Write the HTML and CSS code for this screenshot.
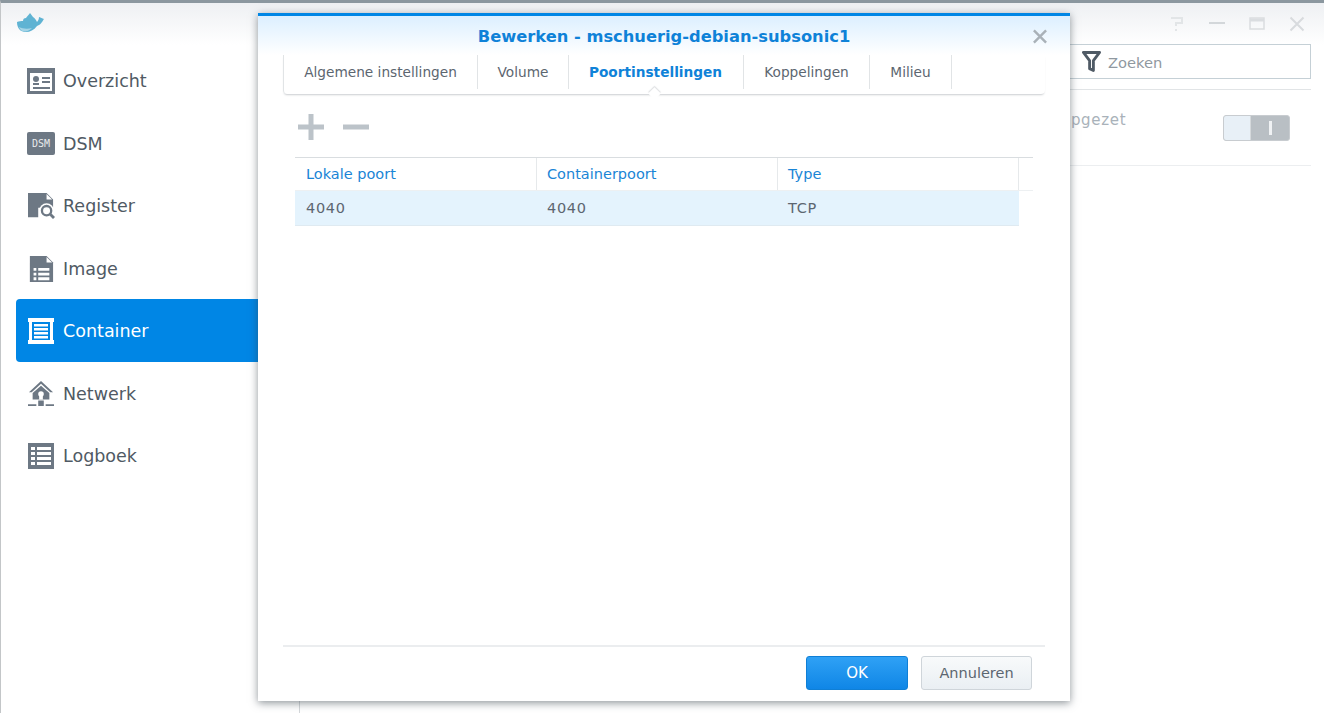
FILE: index.html
```html
<!DOCTYPE html>
<html lang="nl">
<head>
<meta charset="utf-8">
<title>Docker</title>
<link rel="stylesheet" href="styles.css">
</head>
<body>
<div class="window">
  <header class="titlebar">
    <svg class="whale" viewBox="0 0 30 20"><path d="M1 9c2-1 4-1 6-1 0-2 1-3 3-3 1-2 3-3 4-5 1 1 2 3 3 4 2 1 3 3 4 5 1-1 2-3 2-5 2 1 3 1 5 2-1 1-1 2-2 3-1 2-3 3-5 4-3 4-7 6-11 6-6 0-9-4-9-10z" fill="#5fb3d3"/><path d="M3 14c4 2 9 2 13 1-3 3-6 4-9 3-2 0-3-2-4-4z" fill="#a5d4e6"/></svg>
    <div class="win-controls">
      <svg class="ctl" viewBox="0 0 16 16"><path d="M2 2h11v5H7v3M7 13v2" fill="none" stroke="#e2e5e7" stroke-width="2"/></svg>
      <svg class="ctl" viewBox="0 0 16 16"><path d="M0 7h16" stroke="#d3d7da" stroke-width="2"/></svg>
      <svg class="ctl" viewBox="0 0 16 16"><path d="M1 2h14v11H1z" fill="none" stroke="#dadde0" stroke-width="1.5"/><path d="M1 4h14" stroke="#dadde0" stroke-width="3"/></svg>
      <svg class="ctl" viewBox="0 0 16 16"><path d="M1.500 1.500l13 13M14.500 1.500l-13 13" stroke="#d8dbde" stroke-width="2"/></svg>
    </div>
  </header>
  <div class="body">
    <nav class="sidebar">
      <a class="item"><svg class="icon" viewBox="0 0 28 26"><path d="M0 0h28v26H0z" fill="#6d7884"/><path d="M3 5h22v18H3z" fill="#fff"/><circle cx="9" cy="11" r="3" fill="#6d7884"/><path d="M6 15h6v2H6zM15 9h8v2h-8zM15 13h8v2h-8zM6 19h17v2H6z" fill="#6d7884"/></svg>Overzicht</a>
      <a class="item"><span class="dsm">DSM</span>DSM</a>
      <a class="item"><svg class="icon" viewBox="0 0 28 28"><path d="M0 0h20l7 7v9H0zM0 16h11v10H0z" fill="#6d7884"/><path d="M20 1v6h6z" fill="#fff"/><circle cx="20" cy="19" r="8" fill="#fff"/><circle cx="20" cy="19" r="5" fill="none" stroke="#6d7884" stroke-width="2.5"/><path d="M24 23l4 4" stroke="#6d7884" stroke-width="3"/></svg>Register</a>
      <a class="item"><svg class="icon" viewBox="0 0 28 28"><path d="M2 0h18l7 7v21H2z" fill="#6d7884"/><path d="M20 1v6h6z" fill="#fff"/><path d="M6 13h3v3H6zM11 13h12v3H11zM6 18h3v3H6zM11 18h12v3H11zM6 23h3v3H6zM11 23h12v3H11z" fill="#fff"/></svg>Image</a>
      <a class="item active"><svg class="icon" viewBox="0 0 28 26"><path d="M1 0h26v4H1zM1 22h26v4H1zM2 4h3v18H2zM23 4h3v18h-3zM7 6h14v2.500H7zM7 10h14v2.500H7zM7 14h14v2.500H7zM7 18h14v2.500H7z" fill="#fff"/></svg>Container</a>
      <a class="item"><svg class="icon" viewBox="0 0 28 28"><path d="M14 0l13 12h-3L14 3 4 12H1z" fill="#6d7884"/><path d="M14 5l9 8v7H5v-7z" fill="#6d7884"/><circle cx="14" cy="14" r="3" fill="#fff"/><path d="M12 16h4v4h-4z" fill="#fff"/><path d="M0 25h9v2H0zM19 25h9v2h-9zM11 21h6v6h-6z" fill="#6d7884"/></svg>Netwerk</a>
      <a class="item"><svg class="icon" viewBox="0 0 28 26"><path d="M1 0h26v26H1z" fill="#6d7884"/><path d="M4 4h4v3H4zM10 4h14v3H10zM4 9h4v3H4zM10 9h14v3H10zM4 14h4v3H4zM10 14h14v3H10zM4 19h4v3H4zM10 19h14v3H10z" fill="#fff"/></svg>Logboek</a>
    </nav>
    <main class="content">
      <div class="toolbar">
        <div class="search">
          <svg class="filter" viewBox="0 0 20 22"><path d="M1.500 1.500h17l-6.500 8.500v10.500l-4-2v-8.500z" fill="none" stroke="#4f5a65" stroke-width="3" stroke-linejoin="round"/></svg>
          <span class="search-text">Zoeken</span>
        </div>
      </div>
      <div class="row">
        <span class="row-text">opgezet</span>
        <div class="toggle"><span class="knob"></span><span class="track"><i></i></span></div>
      </div>
    </main>
  </div>
</div>

<section class="dialog">
  <header class="dlg-head">
    <h1>Bewerken - mschuerig-debian-subsonic1</h1>
    <svg class="dlg-close" viewBox="0 0 16 16"><path d="M1.500 1.500l13 13M14.500 1.500l-13 13" stroke="#a9b1b8" stroke-width="2.600"/></svg>
  </header>
  <div class="tabs">
    <a class="tab t1">Algemene instellingen</a>
    <a class="tab t2">Volume</a>
    <a class="tab t3 on">Poortinstellingen</a>
    <a class="tab t4">Koppelingen</a>
    <a class="tab t5">Milieu</a>
  </div>
  <div class="tools">
    <svg class="tool" viewBox="0 0 26 26"><path d="M0 13h26M13 0v26" stroke="#bcc3c9" stroke-width="5"/></svg>
    <svg class="tool" viewBox="0 0 26 26"><path d="M0 13h26" stroke="#bcc3c9" stroke-width="5"/></svg>
  </div>
  <div class="grid">
    <div class="grid-head">
      <span>Lokale poort</span><span>Containerpoort</span><span>Type</span><span></span>
    </div>
    <div class="grid-row">
      <span>4040</span><span>4040</span><span>TCP</span>
    </div>
  </div>
  <footer class="dlg-foot">
    <button class="btn ok">OK</button>
    <button class="btn cancel">Annuleren</button>
  </footer>
</section>
</body>
</html>
```

FILE: styles.css
```css
* { box-sizing: border-box; }
html, body { margin: 0; height: 100%; overflow: hidden; }
body {
  background: #fff;
  font-family: "DejaVu Sans", Verdana, sans-serif;
  color: #505a64;
  position: relative;
}
.window {
  height: 713px;
  border-top: 3px solid #8b979f;
  border-left: 1px solid #c3c6c8;
  display: flex;
  flex-direction: column;
}
.titlebar {
  height: 42px;
  flex: none;
  background: linear-gradient(#eef0f3, #fff);
  display: flex;
  justify-content: space-between;
  padding: 10px 19px 0 15px;
}
.whale { width: 30px; height: 20px; }
.win-controls { display: flex; gap: 24px; padding-top: 3px; }
.ctl { width: 16px; height: 16px; }
.body { flex: 1; display: flex; min-height: 0; }
.sidebar {
  width: 299px;
  flex: none;
  border-right: 1px solid #d4d7da;
  padding: 4px 0 0 15px;
}
.item {
  display: flex;
  align-items: center;
  height: 62.5px;
  padding: 1.5px 0 0 11px;
  gap: 8px;
  font-size: 17.5px;
  color: #505a64;
}
.item.active { background: #0086e5; color: #fff; border-radius: 4px 0 0 4px; }
.icon { width: 28px; height: 26px; flex: none; }
.dsm {
  width: 28px;
  height: 23px;
  flex: none;
  background: #6d7884;
  border-radius: 2px;
  color: #e8eaec;
  font: 10px/23px "DejaVu Sans Mono", monospace;
  text-align: center;
}
.content { flex: 1; padding: 0 13px 0 0; min-width: 0; }
.toolbar {
  height: 45px;
  display: flex;
  flex-direction: column;
  border-bottom: 1px solid #e1e4e6;
}
.search {
  margin-top: -1px;
  height: 35px;
  border: 1px solid #c5d0d6;
  display: flex;
  align-items: center;
  padding-left: 781px;
  gap: 7px;
  font-size: 14.7px;
  color: #8f98a0;
}
.search-text { padding-top: 1px; }
.filter { width: 19px; height: 21px; }
.row {
  height: 76px;
  border-bottom: 1px solid #eceef0;
  display: flex;
  justify-content: space-between;
  padding: 21px 21px 0 0;
}
.row-text { padding-left: 761px; font-size: 15px; letter-spacing: .7px; color: #a9b2ba; }
.toggle {
  width: 67px;
  height: 26px;
  margin-top: 4px;
  display: flex;
  border: 1px solid #c8ccd0;
  border-radius: 3px;
  background: #b9bfc4;
  overflow: hidden;
}
.knob { width: 27px; background: #e8f0f7; border-right: 1px solid #d5d9dc; }
.track { flex: 1; display: flex; align-items: center; justify-content: center; }
.track i { width: 3px; height: 14px; background: #f0f2f4; }

.dialog {
  position: absolute;
  left: 258px;
  top: 13px;
  width: 812px;
  height: 688px;
  background: #fff;
  border-top: 3px solid #0086e5;
  box-shadow: 0 2px 8px rgba(50, 60, 70, .55);
  padding: 0 25px;
  display: flex;
  flex-direction: column;
}
.dlg-head {
  height: 39px;
  margin: 0 -25px;
  background: linear-gradient(#dcefff, #fff);
  display: flex;
  align-items: center;
  justify-content: center;
  position: relative;
}
.dlg-head h1 {
  margin: 1px 0 0;
  font-size: 16.3px;
  font-weight: bold;
  color: #0f82d8;
}
.dlg-close { position: absolute; right: 22px; top: 13px; width: 16px; height: 15px; }
.tabs {
  height: 39px;
  display: flex;
  border-left: 1px solid #e1e4e6;
  box-shadow: 0 2px 2px -1px rgba(80, 90, 100, .3);
  border-radius: 0 0 4px 4px;
  position: relative;
  font-size: 13.7px;
  padding-bottom: 5px;
}
.tab {
  display: flex;
  align-items: center;
  justify-content: center;
  border-right: 1px solid #e1e4e6;
  color: #5c6670;
}
.t1 { width: 194px; }
.t2 { width: 91px; }
.t3 { width: 175px; padding-right: 1px; }
.t4 { width: 126px; }
.t5 { width: 82px; }
.tab.on { color: #0f82d8; font-weight: bold; position: relative; }
.tab.on::after {
  content: "";
  position: absolute;
  left: 81px;
  bottom: -9px;
  width: 9px;
  height: 9px;
  background: #fff;
  transform: rotate(45deg);
  box-shadow: -1px -1px 1px rgba(80, 90, 100, .18);
}
.tools {
  height: 63px;
  display: flex;
  gap: 19px;
  padding: 20px 0 0 15px;
  flex: none;
}
.tool { width: 26px; height: 26px; }
.grid { margin: 0 12px; flex: 1; font-size: 14.5px; }
.grid-head {
  display: grid;
  grid-template-columns: 241px 241px 241px 15px;
  height: 34px;
  border-top: 1px solid #d9dde0;
  border-bottom: 1px solid #edf0f2;
  color: #1a85d6;
}
.grid-head span {
  display: flex;
  align-items: center;
  padding-left: 11px;
}
.grid-head span + span { border-left: 1px solid #e6e9eb; padding-left: 10px; }
.grid-row {
  display: grid;
  grid-template-columns: 241px 241px 241px;
  width: 724px;
  height: 35px;
  background: #e4f3fd;
  border-bottom: 1px solid #dfeaf1;
  color: #5c6670;
}
.grid-row span { display: flex; align-items: center; padding-left: 11px; letter-spacing: .7px; }
.dlg-foot {
  height: 53px;
  flex: none;
  margin-bottom: 3px;
  border-top: 2px solid #ebedef;
  display: flex;
  justify-content: flex-end;
  gap: 13px;
  padding: 9px 13px 0 0;
}
.btn {
  height: 34px;
  border-radius: 3px;
  font-family: inherit;
  font-size: 14.5px;
  padding: 0;
}
.ok {
  width: 102px;
  background: linear-gradient(#2fa1f5, #0f86e6);
  border: 1px solid #0f7fd6;
  color: #fff;
  font-size: 15px;
}
.cancel {
  width: 111px;
  background: linear-gradient(#f8fafb, #eaeff3);
  border: 1px solid #cfd5da;
  color: #5c6670;
}
```
